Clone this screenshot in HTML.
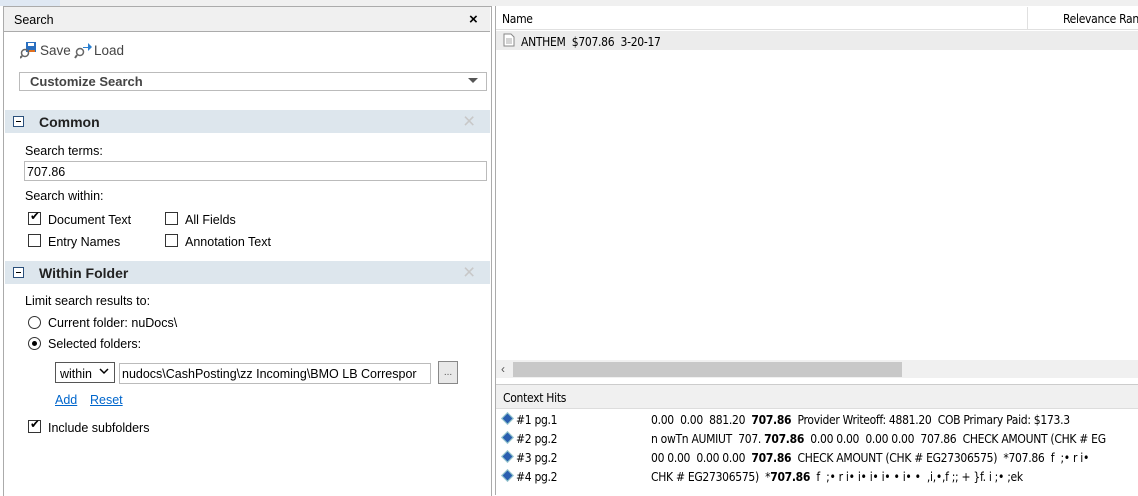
<!DOCTYPE html><html><head><style>
body{margin:0;width:1138px;height:495px;background:#fff;font-family:"Liberation Sans",sans-serif;font-size:12.5px;color:#000;position:relative;overflow:hidden}
.a{position:absolute;white-space:nowrap}
.cb{position:absolute;width:11px;height:11px;border:1px solid #333;background:#fff}
.rb{position:absolute;width:11px;height:11px;border:1px solid #333;border-radius:50%;background:#fff}
.sec{position:absolute;left:5px;width:485px;height:23px;background:#dde6ed}
.n{font-family:"DejaVu Sans Condensed","Liberation Sans Narrow",sans-serif;font-size:12px;letter-spacing:-0.3px}
.d{position:absolute;width:7px;height:7px;background:#2a5fb0;transform:rotate(45deg);border:1px solid #9cc}
.x{position:absolute;left:463px;font-size:21px;color:#c8c8c8;line-height:21px}
</style></head><body>
<div class="a" style="left:0;top:0;width:1138px;height:6px;background:#f0f0f0"></div>
<div class="a" style="left:0;top:0;width:60px;height:6px;background:#dfe8f3"></div>
<div class="a" style="left:3px;top:6px;width:487px;height:489px;border:1px solid #ababab;border-bottom:none"></div>
<div class="a" style="left:4px;top:7px;width:486px;height:24px;background:#f0f0f0;border-bottom:1px solid #ababab"></div>
<div class="a" style="left:14px;top:13px;font-size:12.5px">Search</div>
<div class="a" style="left:469px;top:11px;font-size:15px;font-weight:bold">×</div>
<svg class="a" style="left:20px;top:41px" width="18" height="18"><rect x="6" y="1" width="10" height="10" fill="#2a6fc0"/><rect x="8" y="2" width="6" height="3" fill="#fff"/><rect x="9" y="9" width="6" height="2" fill="#e07020"/><circle cx="5" cy="12" r="3.5" fill="none" stroke="#666" stroke-width="1.5"/><line x1="2" y1="15" x2="0" y2="17" stroke="#666" stroke-width="2"/></svg>
<div class="a" style="left:40px;top:43px;color:#444;font-size:13.5px">Save</div>
<svg class="a" style="left:74px;top:41px" width="18" height="18"><path d="M9 6h5V2l4 4-4 4V7H9z" fill="#2a7fd0"/><circle cx="6" cy="11" r="3.5" fill="none" stroke="#666" stroke-width="1.5"/><line x1="3" y1="14" x2="1" y2="17" stroke="#666" stroke-width="2"/></svg>
<div class="a" style="left:94px;top:43px;color:#444;font-size:13.5px">Load</div>
<div class="a" style="left:19px;top:72px;width:466px;height:17px;border:1px solid #bbb"></div>
<div class="a" style="left:30px;top:74px;font-weight:bold;color:#444;font-size:13px">Customize Search</div>
<div class="a" style="left:468px;top:78px;width:0;height:0;border-left:5px solid transparent;border-right:5px solid transparent;border-top:5px solid #555"></div>
<div class="sec" style="top:110px"></div>
<div class="a" style="left:13px;top:116px;width:9px;height:9px;border:1px solid #2a4f7a;background:#fff"></div><div class="a" style="left:16px;top:121px;width:5px;height:1px;background:#000"></div>
<div class="a" style="left:39px;top:114px;font-weight:bold;font-size:14px;color:#222">Common</div>
<div class="x" style="top:111px">×</div>
<div class="a" style="left:25px;top:144px">Search terms:</div>
<div class="a" style="left:24px;top:161px;width:461px;height:18px;border:1px solid #bbb"></div>
<div class="a" style="left:27px;top:165px">707.86</div>
<div class="a" style="left:25px;top:189px">Search within:</div>
<div class="cb" style="left:28px;top:212px"></div><div class="a" style="left:30px;top:209px;font-size:12px">✔</div>
<div class="a" style="left:48px;top:213px">Document Text</div>
<div class="cb" style="left:165px;top:212px"></div><div class="a" style="left:185px;top:213px">All Fields</div>
<div class="cb" style="left:28px;top:234px"></div><div class="a" style="left:48px;top:235px">Entry Names</div>
<div class="cb" style="left:165px;top:234px"></div><div class="a" style="left:185px;top:235px">Annotation Text</div>
<div class="sec" style="top:261px"></div>
<div class="a" style="left:13px;top:267px;width:9px;height:9px;border:1px solid #2a4f7a;background:#fff"></div><div class="a" style="left:16px;top:272px;width:5px;height:1px;background:#000"></div>
<div class="a" style="left:39px;top:265px;font-weight:bold;font-size:14px;color:#222">Within Folder</div>
<div class="x" style="top:262px">×</div>
<div class="a" style="left:25px;top:294px">Limit search results to:</div>
<div class="rb" style="left:28px;top:316px"></div><div class="a" style="left:48px;top:316px">Current folder: nuDocs\</div>
<div class="rb" style="left:28px;top:337px"></div><div class="a" style="left:32px;top:341px;width:5px;height:5px;border-radius:50%;background:#000"></div>
<div class="a" style="left:48px;top:337px">Selected folders:</div>
<div class="a" style="left:55px;top:362px;width:58px;height:19px;border:1px solid #555"></div>
<div class="a" style="left:60px;top:367px">within</div>
<svg class="a" style="left:99px;top:368px" width="10" height="7"><path d="M1 1l4 4 4-4" fill="none" stroke="#000" stroke-width="1.5"/></svg>
<div class="a" style="left:119px;top:363px;width:310px;height:19px;border:1px solid #bbb"></div>
<div class="a" style="left:122px;top:367px">nudocs\CashPosting\zz Incoming\BMO LB Correspor</div>
<div class="a" style="left:438px;top:361px;width:18px;height:21px;border:1px solid #888;background:#e8e8e8;font-size:10px;text-align:center;line-height:21px;color:#555">...</div>
<div class="a" style="left:55px;top:393px;color:#0066cc;text-decoration:underline">Add</div>
<div class="a" style="left:90px;top:393px;color:#0066cc;text-decoration:underline">Reset</div>
<div class="cb" style="left:28px;top:420px"></div><div class="a" style="left:30px;top:417px;font-size:12px">✔</div>
<div class="a" style="left:48px;top:421px">Include subfolders</div>
<div class="a" style="left:495px;top:6px;width:643px;height:489px;border-left:1px solid #ababab"></div>
<div class="a" style="left:496px;top:7px;width:642px;height:22px;border-bottom:1px solid #e0e0e0"></div>
<div class="a" style="left:1027px;top:7px;width:1px;height:22px;background:#e0e0e0"></div>
<div class="a n" style="left:502px;top:12px">Name</div>
<div class="a n" style="left:1063px;top:12px">Relevance Ran</div>
<div class="a" style="left:496px;top:31px;width:642px;height:19px;background:#ececec"></div>
<svg class="a" style="left:503px;top:33px" width="12" height="14"><path d="M1 1h7l3 3v9H1z" fill="#fff" stroke="#888"/><path d="M3 6h6M3 8h6M3 10h6" stroke="#aaa"/></svg>
<div class="a n" style="left:521px;top:35px">ANTHEM&nbsp; $707.86&nbsp; 3-20-17</div>
<div class="a" style="left:496px;top:360px;width:642px;height:18px;background:#f0f0f0"></div>
<div class="a" style="left:513px;top:362px;width:389px;height:15px;background:#c8c8c8"></div>
<div class="a" style="left:501px;top:362px;font-size:12px;color:#555">‹</div>
<div class="a" style="left:496px;top:384px;width:642px;height:23px;background:#f0f0f0;border-top:1px solid #ccc;border-bottom:1px solid #ddd"></div>
<div class="a n" style="left:503px;top:391px">Context Hits</div>
<div class="d" style="left:503px;top:414px"></div><div class="a n" style="left:516px;top:413px">#1 pg.1</div>
<div class="a n" style="left:651px;top:413px">0.00&nbsp; 0.00&nbsp; 881.20&nbsp; <b>707.86</b>&nbsp; Provider Writeoff: 4881.20&nbsp; COB Primary Paid: $173.3</div>
<div class="d" style="left:503px;top:433px"></div><div class="a n" style="left:516px;top:432px">#2 pg.2</div>
<div class="a n" style="left:651px;top:432px">n owTn AUMIUT&nbsp; 707. <b>707.86</b>&nbsp; 0.00 0.00&nbsp; 0.00 0.00&nbsp; 707.86&nbsp; CHECK AMOUNT (CHK # EG</div>
<div class="d" style="left:503px;top:452px"></div><div class="a n" style="left:516px;top:451px">#3 pg.2</div>
<div class="a n" style="left:651px;top:451px">00 0.00&nbsp; 0.00 0.00&nbsp; <b>707.86</b>&nbsp; CHECK AMOUNT (CHK # EG27306575)&nbsp; *707.86&nbsp; f&nbsp; ;• r i•</div>
<div class="d" style="left:503px;top:471px"></div><div class="a n" style="left:516px;top:470px">#4 pg.2</div>
<div class="a n" style="left:651px;top:470px">CHK # EG27306575)&nbsp; *<b>707.86</b>&nbsp; f&nbsp; ;• r i• i• i• i• • i• •&nbsp; ,i,•,f ;; + }f. i ;• ;ek</div>
</body></html>
